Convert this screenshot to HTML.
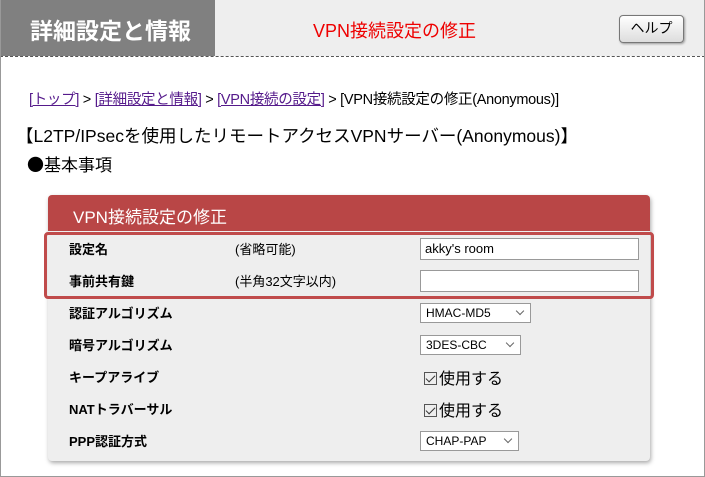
<!DOCTYPE html>
<html><head><meta charset="utf-8"><style>
*{margin:0;padding:0;box-sizing:border-box}
body{width:705px;height:477px;overflow:hidden;background:#fff;font-family:"Liberation Sans","Noto Sans CJK JP",sans-serif;position:relative}
.frame{position:absolute;left:0;top:0;width:705px;height:477px;border:1px solid #999;border-top:none}
.hl{position:absolute;left:0;top:0;width:215px;height:56px;background:#808080;color:#fff;font-size:23px;font-weight:bold;padding:12px 0 0 30px}
.hr{position:absolute;left:215px;top:0;width:490px;height:56px;background:#eeeeee;color:#e00;font-size:18px;padding:17px 0 0 98px}
.hline{position:absolute;left:0;top:56px;width:705px;border-top:1px dashed #555}
.help{position:absolute;left:619px;top:15px;width:65px;height:28px;border:1px solid #777;border-radius:4px;background:linear-gradient(#fff,#ddd);box-shadow:1px 1px 2px #999;font-size:14px;text-align:center;line-height:25px;color:#000}
.bc{position:absolute;left:29px;top:88px;font-size:14.5px;color:#000;letter-spacing:-0.3px}
.bc a{color:#551a8b;text-decoration:underline}
.t1{position:absolute;left:16px;top:123px;font-size:17.5px}
.t2{position:absolute;left:27px;top:151px;font-size:17px}
.card{position:absolute;left:48px;top:195px;width:602px;height:266px;background:#eee;border-radius:4px;box-shadow:1px 2px 4px #aaa}
.ch{position:absolute;left:48px;top:195px;width:602px;height:36px;background:#b94646;border-radius:4px 4px 0 0;color:#fff;font-size:17px;padding:8px 0 0 25px}
.red{position:absolute;left:44px;top:232px;width:610px;height:67px;border:3px solid #c04b4b;border-radius:4px}
.lb{position:absolute;left:69px;font-size:13px;font-weight:bold}
.nt{position:absolute;left:235px;font-size:13px}
.in{position:absolute;left:420px;width:219px;height:22px;background:#fff;border:1px solid #999;font-size:13px;padding:2px 4px}
.sel{position:absolute;left:420px;height:20px;background:#fff;border:1px solid #999;font-size:12px;padding:2px 5px}
.sel:after{content:"";position:absolute;right:7px;top:4px;width:5px;height:5px;border-right:1px solid #666;border-bottom:1px solid #666;transform:rotate(45deg)}
.cb{position:absolute;left:424px;font-size:16px}
.cb i{display:inline-block;width:13px;height:13px;border:1px solid #555;vertical-align:-1px;margin-right:2px;position:relative}
.cb i:after{content:"";position:absolute;left:3px;top:0px;width:4px;height:8px;border-right:1px solid #333;border-bottom:1px solid #333;transform:rotate(45deg)}
</style></head><body>
<div class="hl">詳細設定と情報</div>
<div class="hr">VPN接続設定の修正</div>
<div class="hline"></div>
<div class="help">ヘルプ</div>
<div class="bc"><a>[トップ]</a> &gt; <a>[詳細設定と情報]</a> &gt; <a>[VPN接続の設定]</a> &gt; [VPN接続設定の修正(Anonymous)]</div>
<div class="t1">【L2TP/IPsecを使用したリモートアクセスVPNサーバー(Anonymous)】</div>
<div class="t2"><span style="font-family:'Noto Sans CJK JP',sans-serif">●</span>基本事項</div>
<div class="card"></div>
<div class="ch">VPN接続設定の修正</div>
<div class="lb" style="top:239px">設定名</div><div class="nt" style="top:239px">(省略可能)</div>
<div class="in" style="top:238px">akky's room</div>
<div class="lb" style="top:271px">事前共有鍵</div><div class="nt" style="top:271px">(半角32文字以内)</div>
<div class="in" style="top:270px"></div>
<div class="red"></div>
<div class="lb" style="top:303px">認証アルゴリズム</div><div class="sel" style="top:303px;width:111px">HMAC-MD5</div>
<div class="lb" style="top:335px">暗号アルゴリズム</div><div class="sel" style="top:335px;width:101px">3DES-CBC</div>
<div class="lb" style="top:367px">キープアライブ</div><div class="cb" style="top:365px"><i></i>使用する</div>
<div class="lb" style="top:399px">NATトラバーサル</div><div class="cb" style="top:397px"><i></i>使用する</div>
<div class="lb" style="top:431px">PPP認証方式</div><div class="sel" style="top:431px;width:99px">CHAP-PAP</div>
<div class="frame"></div>
</body></html>
